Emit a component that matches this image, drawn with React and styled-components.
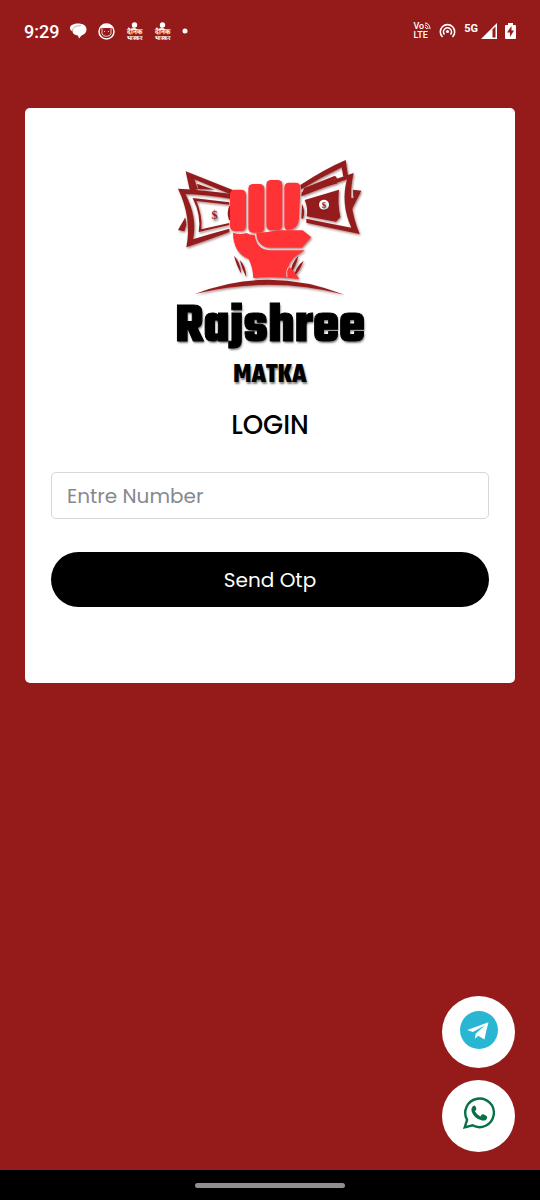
import React from 'react'
import styled, { createGlobalStyle } from 'styled-components'

const GlobalStyle = createGlobalStyle`
  * {
    box-sizing: border-box;
  }

  body {
    margin: 0;
    background: #951b1b;
    font-family: Poppins, Inter, sans-serif;
  }
`

const Page = styled.div`
  min-height: 100vh;
  display: flex;
  flex-direction: column;
`

const StatusBar = styled.header`
  display: flex;
  align-items: center;
  justify-content: space-between;
  height: 62px;
  padding: 0 24px;
  color: white;
  font-family: Roboto, sans-serif;
`

const StatusGroup = styled.div`
  display: flex;
  align-items: center;
  gap: ${({ $gap }) => $gap}px;

  svg {
    display: block;
  }
`

const Clock = styled.time`
  font-size: 18px;
  font-weight: 500;
`

const Network = styled.span`
  align-self: flex-start;
  font-size: 11px;
  line-height: 11px;
  font-weight: 700;
`

const Signal = styled.div`
  display: flex;
  align-items: center;
  gap: 3px;
`

const Volte = styled.div`
  display: flex;
  flex-direction: column;
  font-size: 9px;
  line-height: 9px;
  font-weight: 500;
`

const VolteTop = styled.span`
  display: flex;
`

const Card = styled.main`
  display: flex;
  flex-direction: column;
  margin: 46px 25px 0;
  padding: 42px 26px 76px;
  background: white;
  border-radius: 5px;
`

const Brand = styled.div`
  display: flex;
  flex-direction: column;
  align-items: center;
  color: black;
  font-family: Teko, Roboto, sans-serif;
  font-weight: 700;
  text-shadow: 1px 2px 2px #00000080;
`

const BrandName = styled.span`
  font-size: 55px;
  line-height: 56px;
  -webkit-text-stroke: 1px black;
`

const BrandSub = styled.span`
  font-size: 27px;
  line-height: 40px;
`

const Title = styled.h1`
  margin: 12px 0 30px;
  font-size: 26px;
  line-height: 34px;
  font-weight: 500;
  text-align: center;
`

const NumberInput = styled.input`
  width: 100%;
  height: 47px;
  padding: 0 15px;
  border: 1px solid #d5d7d9;
  border-radius: 5px;
  font-family: inherit;
  font-size: 20px;
  font-weight: 400;

  &::placeholder {
    color: #85898d;
    opacity: 1;
  }
`

const SendButton = styled.button`
  width: 100%;
  height: 55px;
  margin-top: 33px;
  border: 0;
  border-radius: 28px;
  background: black;
  color: white;
  font-family: inherit;
  font-size: 20px;
  cursor: pointer;
`

const Contacts = styled.nav`
  display: flex;
  flex-direction: column;
  align-items: flex-end;
  gap: 12px;
  margin-top: auto;
  padding: 24px 25px 18px;
`

const ContactLink = styled.a`
  display: flex;
  justify-content: center;
  width: 73px;
  height: 72px;
  padding-top: ${({ $top }) => $top}px;
  border-radius: 50%;
  background: white;
`

const GestureBar = styled.footer`
  display: flex;
  align-items: center;
  justify-content: center;
  height: 30px;
  background: black;
`

const Handle = styled.div`
  width: 150px;
  height: 5px;
  border-radius: 3px;
  background: #8f8f8f;
`

const ChatIcon = () => (
  <svg width="17" height="16" viewBox="0 0 17 16" fill="white">
    <path d="M0 5C0 2 4 .5 8 .5c5 0 8.500 2 8.500 6 0 3-2 5-5 6l-2.500 3-1-3C4 12 2.500 10 2.500 8 1 8 0 7 0 5z" />
    <path d="M2.500 8C2.500 4 6 2.600 11 2.600" fill="none" stroke="#951b1b" strokeWidth=".4" />
  </svg>
)

const FaceIcon = () => (
  <svg width="17" height="17" viewBox="0 0 17 17" fill="none" stroke="white">
    <circle cx="8.500" cy="8.500" r="7.500" strokeWidth="1.500" />
    <path d="M3 5l1-2 3-1h3l3 1 1 2-3-.5H6z" fill="white" />
    <path d="M4 6v5c2 3 7 3 9 0V6M6 8.500h1M10 8.500h1" strokeWidth=".8" />
  </svg>
)

const NewsIcon = () => (
  <svg width="17" height="18" viewBox="0 0 17 18" fill="white">
    <circle cx="8.500" cy="3" r="2.700" />
    <path d="M5 8c1-2 6-2 7 0z" />
    <g fontWeight="700" textAnchor="middle">
      <text x="8.500" y="12" fontSize="7">दैनिक</text>
      <text x="8.500" y="18" fontSize="6">भास्कर</text>
    </g>
  </svg>
)

const DotIcon = () => (
  <svg width="6" height="6" viewBox="0 0 6 6" fill="white">
    <circle cx="3" cy="3" r="2.500" />
  </svg>
)

const CallWaves = () => (
  <svg width="7" height="8" viewBox="0 0 7 8" fill="none" stroke="white">
    <path d="M1 1c3 0 5 3 5 6M1 3c2 0 3 2 3 4M1 5l2 2" />
  </svg>
)

const HotspotIcon = () => (
  <svg width="17" height="16" viewBox="0 0 17 16" fill="none" stroke="white" strokeWidth="1.600">
    <path d="M3.500 14a7.200 7.200 0 1 1 10 0M5.500 11.500a4 4 0 1 1 6 0" />
    <circle cx="8.500" cy="8.500" r="1.600" fill="white" stroke="none" />
  </svg>
)

const SignalIcon = () => (
  <svg width="16" height="16" viewBox="0 0 16 16">
    <path d="M0 16L16 0v16z" fill="white" />
    <path d="M11.500 6.500l3-3v11h-3z" fill="#951b1b" />
  </svg>
)

const BatteryIcon = () => (
  <svg width="11" height="16" viewBox="0 0 11 16">
    <path d="M3 0h5v2h2q1 0 1 1v12q0 1-1 1H1q-1 0-1-1V3q0-1 1-1h2z" fill="white" />
    <path d="M6.500 3L2 9.500h3V14l4-6.500H6.500z" fill="#951b1b" />
  </svg>
)

const TelegramIcon = () => (
  <svg width="38" height="38" viewBox="0 0 112 112">
    <circle cx="56" cy="56" r="56" fill="#29b6d3" />
    <path d="M84 33L21 56L38 62L74 42L46 67L44 82L54 73L72 84Q76 62 84 33Z" fill="white" />
  </svg>
)

const WhatsAppIcon = () => (
  <svg width="32" height="32" viewBox="0 0 94 94">
    <path
      d="M5 89L12 67A42 42 0 1 1 28 83Z"
      fill="none"
      stroke="#087044"
      strokeWidth="7"
    />
    <path
      d="M34 25q-11 4-9 16 6 22 31 28 13 2 15-9 0-5-12-9-4-1-8 6-11-4-16-15 6-6 4-9-3-9-5-8Z"
      fill="#087044"
    />
  </svg>
)

const FistLogo = () => (
  <svg width="210" height="150" viewBox="0 0 630 450" role="img" aria-label="Fist holding bank notes">
    <defs>
      <filter id="shade" x="-5%" y="-5%" width="110%" height="115%">
        <feDropShadow dx="3" dy="4" stdDeviation="3" floodColor="#4b0000" floodOpacity=".5" />
      </filter>
    </defs>
    <g filter="url(#shade)" fill="#951b1b">
      {/* left notes */}
      <path d="M62 64L205 121L200 134L88 88L99 118L86 121L74 119Z" />
      <path d="M96 101L100 117L148 119Z" />
      <path d="M39 240L61 202L64 224L58 244Z" />
      <path d="M39 116Q110 119 205 133V148Q120 133 61 132Q98 202 84 268Q140 250 193 236V246Q126 271 64 292Q81 202 39 116Z" />
      <path d="M83 144L193 157V164L94 153Q113 197 109 238L193 219V225L101 246Q110 197 83 144Z" />
      <path d="M193 168Q184 188 192 210L196 210V168Z" />

      {/* right notes */}
      <path d="M406 105Q479 57 542 30L549 78L535 80L530 52Q468 82 409 118Z" />
      <path d="M418 114L510 77L517 86L502 91L518 100L411 129Z" />
      <path d="M410 127Q489 93 566 69Q544 157 584 252Q502 235 424 218V206Q496 221 559 233Q526 161 546 88Q485 109 409 139Z" />
      <path d="M419 150L522 119Q517 159 526 201L513 215L425 199Q430 174 419 150Z" />
      <path d="M564 119L589 122L560 179L555 143L565 145Z" />
      <path d="M411 162Q422 181 414 207L409 205Z" />

      {/* ground */}
      <path d="M90 432Q310 345 538 434Q315 376 90 432Z" />
      <path d="M207 317Q226 335 229 371Q216 350 207 317ZM224 329Q243 348 244 382Q232 360 224 329Z" />
      <path d="M400 318Q379 337 376 372Q394 348 400 318ZM416 332Q393 348 386 381Q406 360 416 332Z" />
    </g>
    <g fill="#ff3234" filter="url(#shade)">
      <rect x="195" y="119" width="48" height="124" rx="14" />
      <rect x="250" y="102" width="48" height="146" rx="14" />
      <rect x="304" y="90" width="48" height="151" rx="14" />
      <path d="M372 98h20q14 0 14 15l-4 94q-3 31-33 33-11 0-11-14V113q0-15 14-15Z" />
      <path d="M274 249Q308 248 341 241H413L439 262L410 293H313Q275 289 274 249Z" />
      <path d="M204 248Q224 255 244 249Q253 255 269 255Q274 298 313 301H420L394 317Q374 332 371 350L385 362L403 387Q323 378 265 384Q263 350 251 327Q205 309 204 248Z" />
    </g>
    <path d="M371 350Q361 364 366 382" fill="none" stroke="white" strokeWidth="2" />
    <circle cx="477" cy="164" r="15" fill="white" />
    <g fill="#951b1b" fontFamily="Liberation Serif, serif" fontWeight="700" textAnchor="middle">
      <text x="149" y="207" fontSize="37">$</text>
      <text x="477" y="173" fontSize="26">$</text>
    </g>
  </svg>
)

export default () => (
  <Page>
    <GlobalStyle />
    <StatusBar>
      <StatusGroup $gap={11}>
        <Clock>9:29</Clock>
        <ChatIcon />
        <FaceIcon />
        <NewsIcon />
        <NewsIcon />
        <DotIcon />
      </StatusGroup>
      <StatusGroup $gap={8}>
        <Volte>
          <VolteTop>
            Vo
            <CallWaves />
          </VolteTop>
          <span>LTE</span>
        </Volte>
        <HotspotIcon />
        <Signal>
          <Network>5G</Network>
          <SignalIcon />
        </Signal>
        <BatteryIcon />
      </StatusGroup>
    </StatusBar>
    <Card>
      <Brand>
        <FistLogo />
        <BrandName>Rajshree</BrandName>
        <BrandSub>MATKA</BrandSub>
      </Brand>
      <Title>LOGIN</Title>
      <NumberInput type="tel" placeholder="Entre Number" aria-label="Entre Number" />
      <SendButton type="button">Send Otp</SendButton>
    </Card>
    <Contacts>
      <ContactLink href="#telegram" aria-label="Telegram" $top={15}>
        <TelegramIcon />
      </ContactLink>
      <ContactLink href="#whatsapp" aria-label="WhatsApp" $top={17}>
        <WhatsAppIcon />
      </ContactLink>
    </Contacts>
    <GestureBar>
      <Handle />
    </GestureBar>
  </Page>
)
